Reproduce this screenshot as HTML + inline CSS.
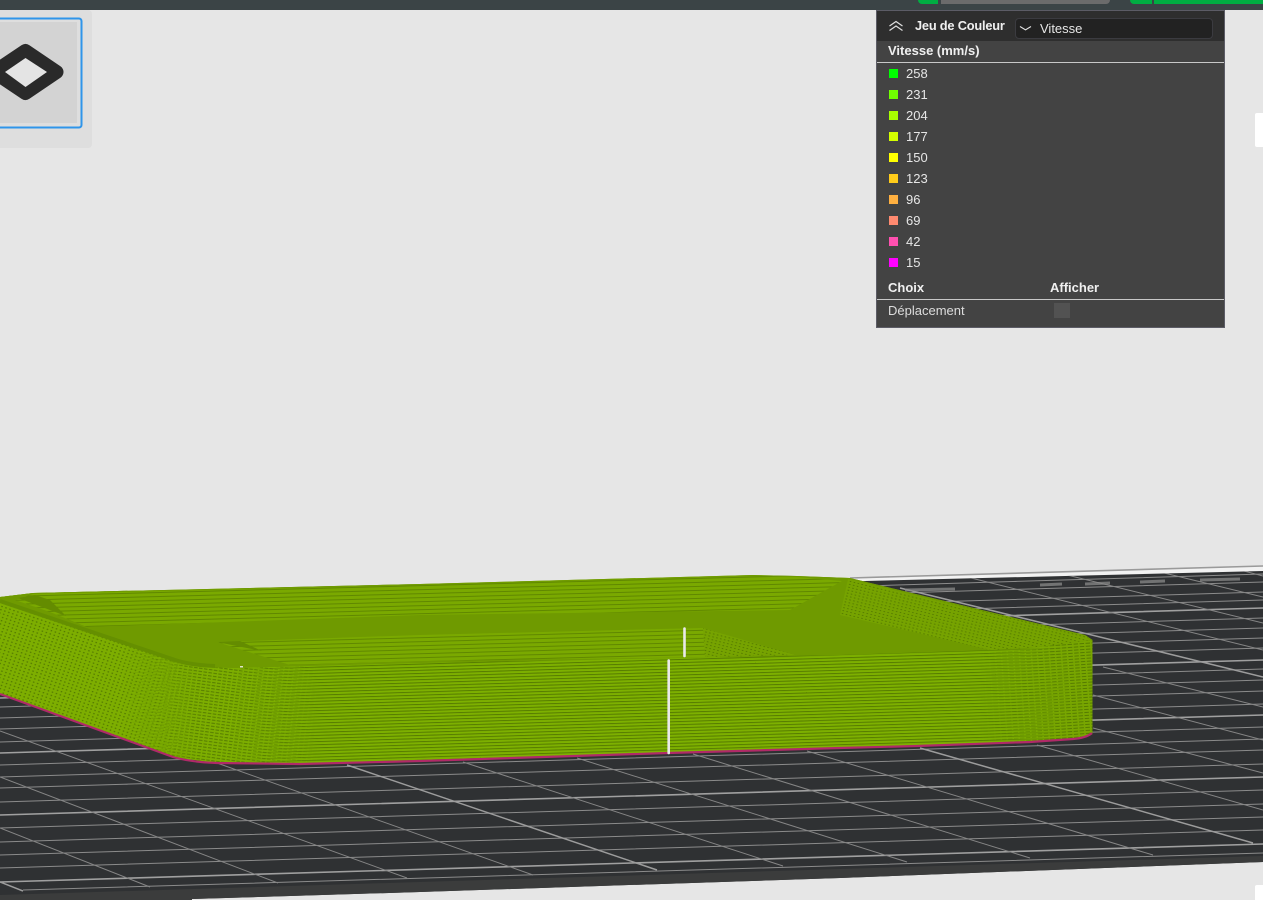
<!DOCTYPE html>
<html lang="fr">
<head>
<meta charset="utf-8">
<title>Aperçu</title>
<style>
html,body{margin:0;padding:0;width:1263px;height:900px;overflow:hidden;background:#e6e6e6;font-family:"Liberation Sans","DejaVu Sans",sans-serif;}
#stage{position:relative;width:1263px;height:900px;overflow:hidden;background:#e6e6e6;}
.abs{position:absolute;}
.t{position:absolute;white-space:nowrap;color:#e6e6e6;font-size:13px;line-height:16px;}
.b{font-weight:bold;color:#f0f0f0;}
.sw{position:absolute;left:889px;width:9px;height:9px;}
</style>
</head>
<body>
<div id="stage">
<svg class="abs" style="left:0;top:0" width="1263" height="900" viewBox="0 0 1263 900">
<defs>
<pattern id="st" width="8" height="3.1" patternUnits="userSpaceOnUse" patternTransform="rotate(-1.7)">
<rect width="8" height="3.1" fill="#7db000"/>
<rect y="0" width="8" height="1" fill="#567c00"/>
</pattern>
<pattern id="stb" width="8" height="4" patternUnits="userSpaceOnUse" patternTransform="rotate(-1.5)">
<rect width="8" height="4" fill="#7aa900"/>
<rect y="0" width="8" height="0.9" fill="#5d8400"/>
</pattern>
<pattern id="dt" width="4.2" height="3.4" patternUnits="userSpaceOnUse" patternTransform="rotate(19)">
<rect width="4.2" height="3.4" fill="#7dae00"/>
<rect x="1.2" y="1" width="1.5" height="1.2" fill="#527800"/>
</pattern>
<pattern id="dt2" width="4" height="3" patternUnits="userSpaceOnUse" patternTransform="rotate(14)">
<rect width="4" height="3" fill="#76a300"/>
<rect x="1.200" y="1" width="1.5" height="1" fill="#567c00"/>
</pattern>
<pattern id="sl" width="5" height="3.1" patternUnits="userSpaceOnUse" patternTransform="rotate(8)">
<rect width="5" height="3.1" fill="#7dae00"/>
<rect y="1" width="3.600" height="1" fill="#567c00"/>
</pattern>
<pattern id="sr" width="6" height="3" patternUnits="userSpaceOnUse" patternTransform="rotate(-4)">
<rect width="6" height="3" fill="#78a600"/>
<rect y="0" width="4.500" height="1" fill="#567c00"/>
</pattern>
<linearGradient id="gd" gradientUnits="userSpaceOnUse" x1="120" y1="0" x2="200" y2="0">
<stop offset="0" stop-color="#fff"/><stop offset="1" stop-color="#000"/>
</linearGradient>
<linearGradient id="gs" gradientUnits="userSpaceOnUse" x1="120" y1="0" x2="320" y2="0">
<stop offset="0" stop-color="#000"/><stop offset=".35" stop-color="#fff"/><stop offset=".55" stop-color="#fff"/><stop offset="1" stop-color="#000"/>
</linearGradient>
<linearGradient id="gr" gradientUnits="userSpaceOnUse" x1="980" y1="0" x2="1075" y2="0">
<stop offset="0" stop-color="#000"/><stop offset="1" stop-color="#fff"/>
</linearGradient>
<mask id="md" maskUnits="userSpaceOnUse" x="0" y="560" width="400" height="240"><rect x="0" y="560" width="400" height="240" fill="url(#gd)"/></mask>
<mask id="ms" maskUnits="userSpaceOnUse" x="0" y="560" width="400" height="240"><rect x="0" y="560" width="400" height="240" fill="url(#gs)"/></mask>
<mask id="mr" maskUnits="userSpaceOnUse" x="900" y="560" width="300" height="240"><rect x="900" y="560" width="300" height="240" fill="url(#gr)"/></mask>
<clipPath id="bed"><path d="M0 660L865 581L1263 571V862L840 878L420 892L192 899V900H0Z"/></clipPath>
<clipPath id="body"><path d="M0 597L33 593L420 584L753 575L797 576L850 578L1085 635L1092.500 640V734Q1086 739 1073 739L1030 742L917 746L840 748L668 753L420 761L300 764L217 763L173 757L0 694Z"/></clipPath>
</defs>

<!-- bed -->
<path d="M850 578L1263 566V574L860 584Z" fill="#f2f2f2"/>
<path d="M850 578L1263 566" stroke="#9a9a9a" stroke-width="1.600" fill="none"/>
<path d="M0 660L865 581L1263 571V862L840 878L420 892L192 899V900H0Z" fill="#2f3133"/>
<path d="M0 895L420 882L840 869L1263 856V862L840 878L420 892L192 899V900H0Z" fill="#3b3c3c"/>
<g clip-path="url(#bed)" fill="none">
<path stroke="#8b8b8b" stroke-width="1" d="M0 612L1263 574M0 620L1263 582M0 630L1263 592M0 638L1263 600M0 656L1263 618M0 666L1263 628M0 676L1263 638M0 686L1263 648M0 707L1263 669M0 718L1263 680M0 729L1263 691M0 742L1263 704M0 765L1263 727M0 777L1263 739M0 788L1263 750M0 802L1263 764M0 828L1263 790M0 842L1263 804M0 855L1263 817M0 868L1263 830M23 890L1263 853"/>
<path stroke="#a0a0a0" stroke-width="1.600" d="M0 646L1263 608M0 698L1263 660M0 753L1263 715M0 815L1263 777M0 882L1263 844"/>
<path stroke="#858585" stroke-width="1" d="M0 731L407 878M0 777L278 883M0 828L150 887M217 763L533 875M463 762L783 866M577 758L907 862M693 754L1030 858M807 751L1153 855M1037 745L1263 810M1093 728L1263 773M1093 695L1263 740M1103 667L1263 707M967 577L1263 650M1067 575L1263 623M1160 572L1263 597M1240 570L1263 576"/>
<path stroke="#9c9c9c" stroke-width="1.500" d="M0 882L23 891M347 765L657 870M920 748L1253 843M900 588L1263 677"/>
<path stroke="#8a8a8a" stroke-width="3" opacity=".75" d="M905 590L955 589M1040 585L1062 584M1085 584L1110 583M1140 582L1165 581M1200 580L1240 579"/>
</g>

<!-- model body -->
<path d="M0 597L33 593L420 584L753 575L797 576L850 578L1085 635L1092.500 640V734Q1086 739 1073 739L1030 742L917 746L840 748L668 753L420 761L300 764L217 763L173 757L0 694Z" fill="url(#st)"/>
<g clip-path="url(#body)">
<rect x="120" y="600" width="200" height="180" fill="url(#sl)" mask="url(#ms)"/>
<rect x="0" y="590" width="200" height="190" fill="url(#dt)" mask="url(#md)"/>
<rect x="980" y="630" width="115" height="115" fill="url(#sr)" mask="url(#mr)"/>
</g>
<path d="M0 694L173 757Q190 762 217 763L300 764L420 761L668 753L840 748L917 746L1030 742L1073 739Q1086 738 1092 733" fill="none" stroke="#b02a68" stroke-width="2.200"/>

<!-- top surface -->
<path d="M0 597L33 593L420 584L753 575L797 576L850 578L1085 635L1092.500 640L1023 649L840 655L420 663L233 668L200 667L180 662L0 602Z" fill="#6f9a00"/>
<!-- back wall -->
<path d="M15 600L50 612L87 627L420 615L790 610L842 581L797 577L753 576L420 585L33 594Z" fill="url(#stb)"/>
<path d="M18 598L50 610L66 616L50 600L35 595Z" fill="#648c00"/>
<!-- left rim -->
<path d="M0 601L175 660Q190 665 215 666" fill="none" stroke="#658f00" stroke-width="4"/>
<!-- right dotted wall -->
<path d="M848 579L1086 636L1090 640L1040 647L990 650L840 615Z" fill="url(#dt2)"/>
<!-- inner recess -->
<path d="M217 642L420 635L703 628L720 657L420 661L290 665Z" fill="url(#stb)"/>
<path d="M703 628L795 655L705 657Z" fill="url(#dt2)"/>
<path d="M217 642L240 641L262 651Z" fill="#648c00"/>

<!-- seams -->
<path d="M684.500 628.500V656" stroke="#e9e9e9" stroke-width="2.600" stroke-linecap="round"/>
<path d="M668.700 660.500V753" stroke="#e9e9e9" stroke-width="2.600" stroke-linecap="round"/>
<rect x="240" y="666" width="3" height="1.500" fill="#dfe6c8"/>

<!-- left panel -->
<path d="M0 10H88a4 4 0 0 1 4 4V144a4 4 0 0 1-4 4H0Z" fill="#dedede"/>
<path d="M0 22H77V123H0Z" fill="#d3d3d3"/>
<path d="M0 18.500H79a2.500 2.500 0 0 1 2.500 2.500V125a2.500 2.500 0 0 1-2.500 2.500H0" fill="none" stroke="#2f95ea" stroke-width="2"/>
<path d="M25.500 51L56.500 72L25.500 93L-6 72Z" fill="none" stroke="#2a2a2a" stroke-width="14" stroke-linejoin="round"/>
<path d="M25.500 58L47 72L25.500 87L5 72Z" fill="#e4e4e4"/>
</svg>

<!-- top bar -->
<div class="abs" style="left:0;top:0;width:1263px;height:10px;background:#3b4446"></div>
<div class="abs" style="left:918px;top:0;width:20px;height:4px;background:#00ae42;border-radius:0 0 0 6px"></div>
<div class="abs" style="left:941px;top:0;width:169px;height:4px;background:#6b6b6b;border-radius:0 0 6px 0"></div>
<div class="abs" style="left:1130px;top:0;width:22px;height:4px;background:#00ae42;border-radius:0 0 0 6px"></div>
<div class="abs" style="left:1154px;top:0;width:109px;height:4px;background:#00ae42"></div>

<!-- white edge boxes -->
<div class="abs" style="left:1255px;top:113px;width:8px;height:34px;background:#fff;border-radius:2px 0 0 2px"></div>
<div class="abs" style="left:1255px;top:885px;width:8px;height:15px;background:#fff;border-radius:2px 0 0 0"></div>

<!-- legend panel -->
<div class="abs" style="left:876px;top:10px;width:347px;height:316px;background:#434343;border:1px solid #5c5c66"></div>
<div class="abs" style="left:877px;top:11px;width:347px;height:30px;background:#2e2e2e"></div>
<svg class="abs" style="left:888px;top:20px" width="16" height="12" viewBox="0 0 16 12"><path d="M1.500 6L8 1.500L14.500 6M1.500 10.500L8 6L14.500 10.500" fill="none" stroke="#e0e0e0" stroke-width="1.200"/></svg>
<div class="t b" style="left:915px;top:18px;letter-spacing:-.2px;font-size:12.800px">Jeu de Couleur</div>
<div class="abs" style="left:1015px;top:18px;width:196px;height:19px;background:#222;border:1px solid #3b3b40;border-radius:4px"></div>
<svg class="abs" style="left:1019px;top:25px" width="13" height="8" viewBox="0 0 13 8"><path d="M1 1.500L6.500 4.800L12 1.500" fill="none" stroke="#e0e0e0" stroke-width="1.100"/></svg>
<div class="t" style="left:1040px;top:21px">Vitesse</div>
<div class="t b" style="left:888px;top:43px">Vitesse (mm/s)</div>
<div class="abs" style="left:877px;top:62px;width:347px;height:1px;background:#c8c8c8"></div>

<div class="sw" style="top:69px;background:#00ff00"></div><div class="t" style="left:906px;top:66px">258</div>
<div class="sw" style="top:90px;background:#70ff00"></div><div class="t" style="left:906px;top:87px">231</div>
<div class="sw" style="top:111px;background:#a8ff00"></div><div class="t" style="left:906px;top:108px">204</div>
<div class="sw" style="top:132px;background:#d4ff00"></div><div class="t" style="left:906px;top:129px">177</div>
<div class="sw" style="top:153px;background:#ffff00"></div><div class="t" style="left:906px;top:150px">150</div>
<div class="sw" style="top:174px;background:#ffcc1a"></div><div class="t" style="left:906px;top:171px">123</div>
<div class="sw" style="top:195px;background:#ffb040"></div><div class="t" style="left:906px;top:192px">96</div>
<div class="sw" style="top:216px;background:#ff8a70"></div><div class="t" style="left:906px;top:213px">69</div>
<div class="sw" style="top:237px;background:#ff50b0"></div><div class="t" style="left:906px;top:234px">42</div>
<div class="sw" style="top:258px;background:#ff00ff"></div><div class="t" style="left:906px;top:255px">15</div>

<div class="t b" style="left:888px;top:280px">Choix</div>
<div class="t b" style="left:1050px;top:280px">Afficher</div>
<div class="abs" style="left:877px;top:299px;width:347px;height:1px;background:#c8c8c8"></div>
<div class="t" style="left:888px;top:303px;color:#dcdcdc">Déplacement</div>
<div class="abs" style="left:1054px;top:303px;width:16px;height:15px;background:#525252"></div>
</div>
</body>
</html>
